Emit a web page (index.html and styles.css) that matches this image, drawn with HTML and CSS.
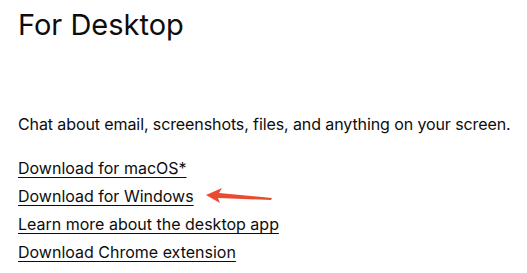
FILE: index.html
```html
<!DOCTYPE html>
<html lang="en">
<head>
    <meta charset="UTF-8">
    <title>For Desktop</title>
    <link rel="stylesheet" href="styles.css">
</head>
<body>
    <section class="desktop">
        <h2>For Desktop</h2>
        <p class="lead">Chat about email, screenshots, files, and anything on your screen.</p>
        <ul class="links">
            <li><a href="#">Download for macOS*</a></li>
            <li class="marked">
                <a href="#">Download for Windows</a>
                <svg class="arrow" width="70" height="16" viewBox="0 0 70 16">
                    <path d="M2 7 L18 0 L15 5 L68 10 L67 12 L14 10 L16 15 Z" fill="#ea4a30"/>
                </svg>
            </li>
            <li><a href="#">Learn more about the desktop app</a></li>
            <li><a href="#">Download Chrome extension</a></li>
        </ul>
    </section>
</body>
</html>
```

FILE: styles.css
```css
body {
    margin: 0;
    background: #ffffff;
    color: #0d0d0d;
    font-family: Inter, "Noto Sans", sans-serif;
}

.desktop {
    padding: 5px 0 0 18px;
}

h2 {
    margin: 0;
    font-size: 29px;
    font-weight: 400;
    line-height: 40px;
}

.lead {
    margin: 67px 0 18px;
    font-size: 16px;
    line-height: 24px;
    letter-spacing: -0.1px;
    white-space: nowrap;
}

.links {
    list-style: none;
    margin: 0;
    padding: 0;
}

.links li {
    display: flex;
    align-items: center;
    height: 28px;
    font-size: 16px;
}

.links a {
    color: #0d0d0d;
    text-decoration: underline;
    text-underline-offset: 3px;
}

.arrow {
    margin-left: 10px;
}
```
